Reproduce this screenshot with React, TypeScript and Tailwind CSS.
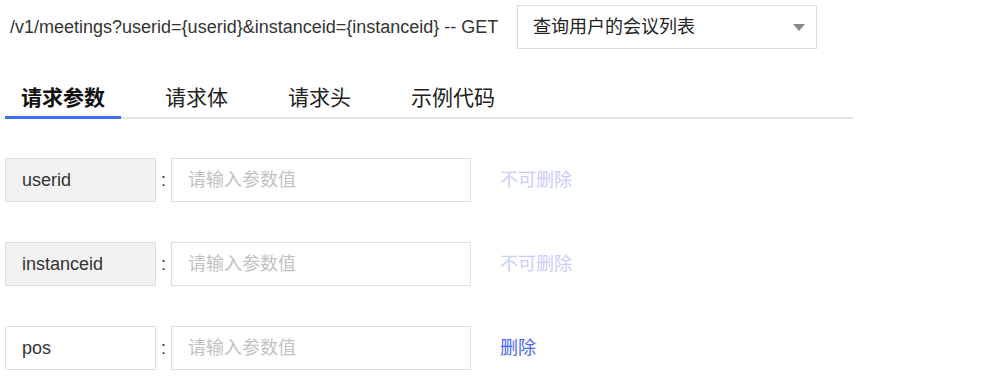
import React from "react";

const rows = [
  { key: "userid", locked: true },
  { key: "instanceid", locked: true },
  { key: "pos", locked: false },
];

const tabs = ["请求参数", "请求体", "请求头", "示例代码"];

export default function App() {
  return (
    <div
      className="w-[987px] h-[387px] bg-white pl-[5px] pt-[5px] text-[#333]"
      style={{ fontFamily: '"Liberation Sans", Arial, "Noto Sans CJK SC", sans-serif' }}
    >
      {/* header */}
      <div className="flex items-center h-[44px]">
        <div className="pl-[5px] w-[512px] text-[18px] leading-[24px] text-[#333]">
          /v1/meetings?userid={"{userid}"}&amp;instanceid={"{instanceid}"} -- GET
        </div>
        <div className="flex items-center justify-between w-[300px] h-[44px] border border-[#dcdcdc] pl-[15px] pr-[11px]">
          <span className="text-[18px] text-[#222]">查询用户的会议列表</span>
          <svg width="12" height="7" viewBox="0 0 12 7">
            <polygon points="0,0 12,0 6,7" fill="#8a8a8a" />
          </svg>
        </div>
      </div>

      {/* tabs */}
      <div className="mt-[23px] flex gap-[28px] w-[848px] border-b-2 border-[#e4e4e4]">
        {tabs.map((t, i) => (
          <div
            key={t}
            className={
              i === 0
                ? "-mb-[2px] px-4 pt-[12px] pb-[4px] border-b-[3px] border-[#3f6ff5] text-[21px] leading-[28px] font-bold text-[#111]"
                : "-mb-[2px] px-4 pt-[12px] pb-[4px] border-b-[3px] border-transparent text-[21px] leading-[28px] text-[#222]"
            }
          >
            {t}
          </div>
        ))}
      </div>

      {/* rows */}
      <div className="mt-[39px] flex flex-col gap-[40px]">
        {rows.map((r) => (
          <div key={r.key} className="flex items-center h-[44px]">
            <div
              className={
                r.locked
                  ? "w-[151px] h-[44px] flex items-center border border-[#dedede] bg-[#f2f2f2] pl-4 text-[18px] text-[#333]"
                  : "w-[151px] h-[44px] flex items-center border border-[#dedede] bg-white pl-4 text-[18px] text-[#333]"
              }
            >
              {r.key}
            </div>
            <div className="w-[15px] text-center text-[18px] text-[#333]">:</div>
            <input
              className="w-[300px] h-[44px] border border-[#dedede] pl-4 text-[18px] outline-none placeholder:text-[#c2c2c2]"
              placeholder="请输入参数值"
            />
            <div
              className={
                r.locked
                  ? "ml-[29px] text-[18px] text-[#c9cdfb]"
                  : "ml-[29px] text-[18px] text-[#4a67f2]"
              }
            >
              {r.locked ? "不可删除" : "删除"}
            </div>
          </div>
        ))}
      </div>
    </div>
  );
}
